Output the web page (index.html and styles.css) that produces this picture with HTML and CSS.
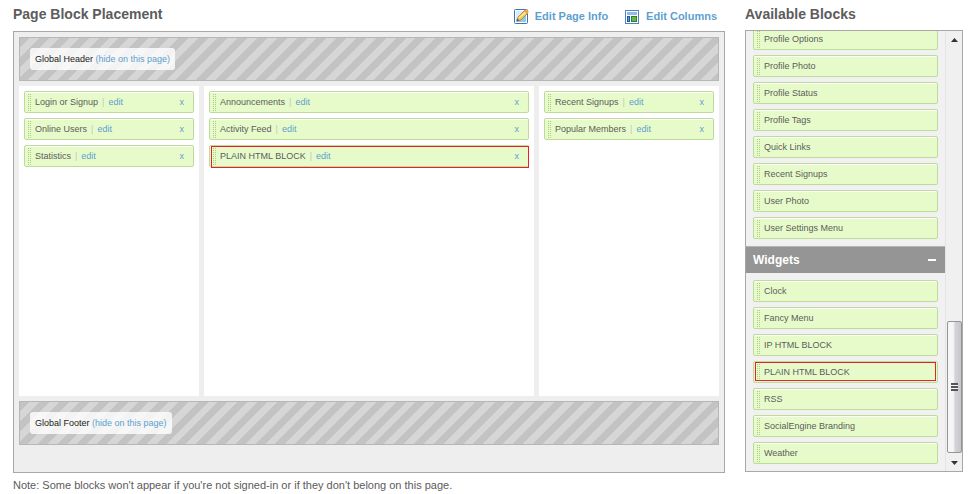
FILE: index.html
```html
<!DOCTYPE html>
<html lang="en">
<head>
<meta charset="utf-8">
<title>Page Block Placement</title>
<link rel="stylesheet" href="styles.css">
</head>
<body>
<div class="page">
  <main class="main">
    <header class="heading">
      <h1 class="title">Page Block Placement</h1>
      <nav class="actions">
        <a class="action" href="#">
          <svg class="icon" viewBox="0 0 16 16" aria-hidden="true">
            <rect x="1.5" y="1.5" width="13" height="14" rx="1" fill="#fff" stroke="#3b73b9"/>
            <path d="M3 3h8L5 8l-2 5z" fill="#d8eafb"/>
            <path d="M3 11l10-5v8H3z" fill="#8fc8f3"/>
            <path d="M4 13l1-4 7-7 3 3-7 7z" fill="#f6c64a" stroke="#a97b2d" stroke-width=".8"/>
            <path d="M5.5 9.5l7-6 1 1-7 6z" fill="#ffeaa0"/>
            <path d="M11 3l1.500-1.500q1.500-.5 2.500.8t.3 2.200L14 6z" fill="#e6a15c"/>
            <path d="M4 13l.6-2 1.500 1.300z" fill="#333"/>
          </svg>
          <span>Edit Page Info</span>
        </a>
        <a class="action" href="#">
          <svg class="icon" viewBox="0 0 16 16" aria-hidden="true">
            <rect x="1.500" y="2.500" width="13" height="13" fill="#fff" stroke="#5682bb"/>
            <rect x="3" y="4" width="10" height="3" fill="#8fbdea"/>
            <rect x="3.500" y="8.500" width="2" height="5" fill="#5b9ee0" stroke="#1e58a4"/>
            <rect x="7.500" y="8.500" width="5" height="5" fill="#62b94f" stroke="#28852a"/>
          </svg>
          <span>Edit Columns</span>
        </a>
      </nav>
    </header>
    <div class="board">
      <section class="band"><div class="chip">Global Header <a href="#">(hide on this page)</a></div></section>
      <div class="columns">
        <ul class="column">
          <li class="block"><span>Login or Signup</span><i class="bar">|</i><a href="#">edit</a><button class="remove">x</button></li>
          <li class="block"><span>Online Users</span><i class="bar">|</i><a href="#">edit</a><button class="remove">x</button></li>
          <li class="block"><span>Statistics</span><i class="bar">|</i><a href="#">edit</a><button class="remove">x</button></li>
        </ul>
        <ul class="column">
          <li class="block"><span>Announcements</span><i class="bar">|</i><a href="#">edit</a><button class="remove">x</button></li>
          <li class="block"><span>Activity Feed</span><i class="bar">|</i><a href="#">edit</a><button class="remove">x</button></li>
          <li class="block marked"><span>PLAIN HTML BLOCK</span><i class="bar">|</i><a href="#">edit</a><button class="remove">x</button></li>
        </ul>
        <ul class="column">
          <li class="block"><span>Recent Signups</span><i class="bar">|</i><a href="#">edit</a><button class="remove">x</button></li>
          <li class="block"><span>Popular Members</span><i class="bar">|</i><a href="#">edit</a><button class="remove">x</button></li>
        </ul>
      </div>
      <section class="band"><div class="chip">Global Footer <a href="#">(hide on this page)</a></div></section>
    </div>
    <p class="note">Note: Some blocks won't appear if you're not signed-in or if they don't belong on this page.</p>
  </main>
  <aside class="side">
    <header class="heading"><h2 class="title">Available Blocks</h2></header>
    <div class="tray">
      <div class="view">
        <ul class="list">
          <li class="block">Profile Options</li>
          <li class="block">Profile Photo</li>
          <li class="block">Profile Status</li>
          <li class="block">Profile Tags</li>
          <li class="block">Quick Links</li>
          <li class="block">Recent Signups</li>
          <li class="block">User Photo</li>
          <li class="block">User Settings Menu</li>
        </ul>
        <h3 class="group">Widgets<button class="toggle" aria-label="Collapse Widgets"></button></h3>
        <ul class="list">
          <li class="block">Clock</li>
          <li class="block">Fancy Menu</li>
          <li class="block">IP HTML BLOCK</li>
          <li class="block marked">PLAIN HTML BLOCK</li>
          <li class="block">RSS</li>
          <li class="block">SocialEngine Branding</li>
          <li class="block">Weather</li>
        </ul>
      </div>
      <div class="scroll" aria-hidden="true">
        <svg class="arrow" viewBox="0 0 7 4"><path d="M0 4L3.500 0 7 4z" fill="#333"/></svg>
        <div class="thumb"><span class="grip"></span></div>
        <svg class="arrow" viewBox="0 0 7 4"><path d="M0 0h7L3.500 4z" fill="#333"/></svg>
      </div>
    </div>
  </aside>
</div>
</body>
</html>
```
FILE: styles.css
```css
* {
  box-sizing: border-box;
}

body {
  margin: 0;
  background: #fff;
  color: #5c5c5c;
  font: 9px/14px "Liberation Sans", Arial, sans-serif;
}

a {
  color: #5f9fd0;
  text-decoration: none;
}

button {
  margin: 0;
  padding: 0;
  border: 0;
  background: none;
  font: inherit;
}

ul {
  margin: 0;
  padding: 0;
  list-style: none;
}

.page {
  display: flex;
  gap: 20px;
  padding: 0 14px 0 13px;
}

.main {
  flex: 1;
  min-width: 0;
}

.side {
  display: flex;
  flex-direction: column;
  width: 218px;
}

.heading {
  display: flex;
  justify-content: space-between;
  height: 31px;
  padding-top: 5px;
}

.side .heading {
  height: 30px;
}

.title {
  margin: 0;
  font-size: 14px;
  line-height: 18px;
}

.actions {
  display: flex;
  gap: 16px;
  padding: 3px 8px 0 0;
}

.action {
  display: flex;
  gap: 6px;
  font-size: 11px;
  font-weight: bold;
  line-height: 16px;
}

.icon {
  width: 16px;
  height: 16px;
}

.board {
  display: flex;
  flex-direction: column;
  gap: 5px;
  padding: 5px 5px 27px;
  border: 1px solid #a8a8a8;
  background: #eee;
}

.band {
  display: flex;
  align-items: center;
  height: 44px;
  padding: 0 10px;
  border: 1px solid #b7b7b7;
  background: repeating-linear-gradient(135deg, #c3c3c3 0 7px, #d6d6d6 7px 14px);
}

.chip {
  padding: 4px 5px;
  border-radius: 3px;
  background: rgba(255, 255, 255, 0.8);
  color: #222;
}

.columns {
  display: grid;
  grid-template-columns: 180fr 330fr 180fr;
  gap: 5px;
  min-height: 310px;
}

.column {
  display: flex;
  flex-direction: column;
  gap: 5px;
  padding: 5px;
  background: #fff;
}

.block {
  position: relative;
  display: flex;
  flex: none;
  align-items: center;
  height: 22px;
  padding: 0 9px 0 10px;
  border: 1px solid #bfdb9b;
  border-radius: 2px;
  background: #e7fbca;
  box-shadow: inset 0 1px #fff;
}

.block::before {
  content: "";
  position: absolute;
  top: 2px;
  left: 2px;
  width: 4px;
  height: 17px;
  background: conic-gradient(#adcc88 25%, transparent 0) 0 0 / 2px 2px;
}

.marked::after {
  content: "";
  position: absolute;
  inset: 0 -1px -2px 1px;
  border: 1px solid #e8202a;
  pointer-events: none;
}

.list .marked::after {
  inset: 0 1px 1px;
}

.bar {
  margin: 0 4px;
  color: #c5c5c5;
  font-style: normal;
}

.remove {
  margin-left: auto;
  color: #5f9fd0;
}

.note {
  margin: 5px 0 0;
  font-size: 11px;
}

.tray {
  display: flex;
  height: 442px;
  border: 1px solid #a8a8a8;
  background: #f1f1f1;
}

.view {
  display: flex;
  flex: 1;
  flex-direction: column;
  justify-content: flex-end;
  overflow: hidden;
}

.list {
  display: flex;
  flex-direction: column;
  gap: 5px;
  padding: 7px;
}

.group {
  display: flex;
  flex: none;
  align-items: center;
  justify-content: space-between;
  height: 27px;
  margin: 0;
  padding: 0 9px 0 7px;
  border-top: 1px solid #b5b5b5;
  background: #959595;
  color: #fff;
  font-size: 12px;
}

.toggle {
  width: 8px;
  height: 2px;
  background: #fff;
}

.scroll {
  display: flex;
  flex-direction: column;
  align-items: center;
  width: 17px;
  padding: 7px 1px 6px;
  border-left: 1px solid #e4e4e4;
  background: #f0f0f0;
}

.arrow {
  width: 7px;
  height: 4px;
}

.thumb {
  display: flex;
  align-items: center;
  justify-content: center;
  width: 15px;
  height: 132px;
  margin: auto 0 8px;
  border: 1px solid #959595;
  border-radius: 2px;
  background: linear-gradient(90deg, #f6f6f6 0 40%, #d4d4d8 55%, #c6c6cb);
}

.grip {
  width: 7px;
  height: 8px;
  background: repeating-linear-gradient(#555 0 2px, #f5f5f5 2px 3px);
}
```
